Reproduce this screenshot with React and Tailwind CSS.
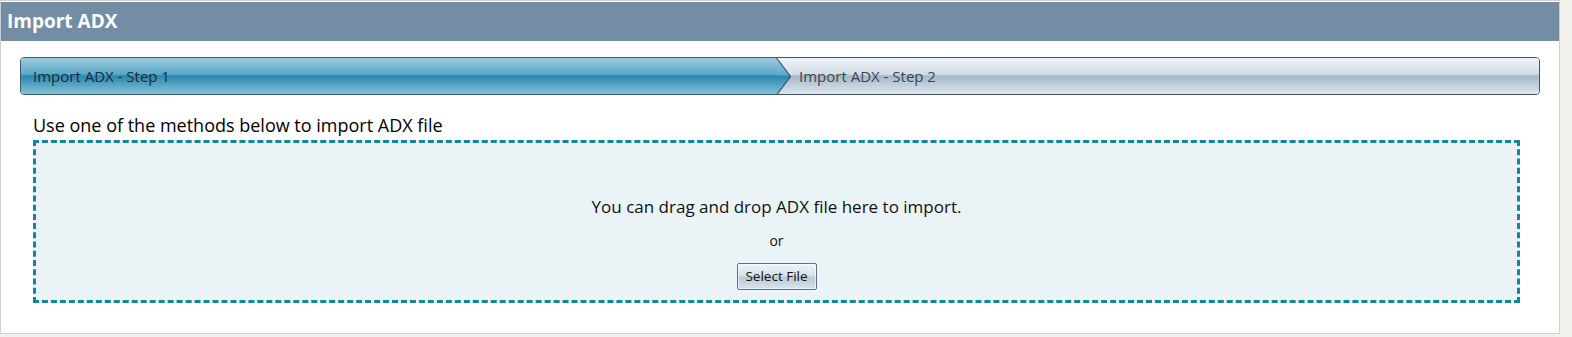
import React from 'react';

const font = { fontFamily: '"Open Sans", "Noto Sans", sans-serif' };

const StepArrow = () => (
  <svg width="16" height="37" viewBox="0 0 16 37" className="block shrink-0">
    <defs>
      <linearGradient id="stepDone" x1="0" y1="0" x2="0" y2="1">
        <stop offset="0" stopColor="#9ccbdf" />
        <stop offset="0.45" stopColor="#5aa9c8" />
        <stop offset="0.5" stopColor="#2a88ad" />
        <stop offset="1" stopColor="#86c2da" />
      </linearGradient>
      <linearGradient id="stepNext" x1="0" y1="0" x2="0" y2="1">
        <stop offset="0" stopColor="#eef2f6" />
        <stop offset="0.45" stopColor="#d3dde6" />
        <stop offset="0.5" stopColor="#a5b8c9" />
        <stop offset="1" stopColor="#dfe6ed" />
      </linearGradient>
    </defs>
    <rect x="0" y="0" width="16" height="37" fill="url(#stepNext)" />
    <polygon points="0,0 1,0 15,18.5 1,37 0,37" fill="url(#stepDone)" />
    <polyline points="0.5,0 14.5,18.5 0.5,37" fill="none" stroke="#3d5a6c" strokeWidth="1.2" />
  </svg>
);

export default function App() {
  return (
    <div className="w-[1572px] h-[337px] bg-[#f3f1ec]" style={font}>
      <div className="w-[1560px] h-[334px] bg-white border border-[#cfcfcf] pt-[1px]">
        <div className="h-[39px] bg-[#738ea4] flex items-center px-[6px]">
          <span className="text-white font-bold text-[19px] leading-none">Import ADX</span>
        </div>

        <div className="mt-[16px] ml-[19px] w-[1520px] h-[38px] flex border border-[#3c566a] rounded-[4px] overflow-hidden">
          <div className="w-[755px] flex items-center pl-[12px] text-[15px] text-[#1b2b38] bg-[linear-gradient(to_bottom,#9ccbdf_0%,#5aa9c8_45%,#2a88ad_50%,#86c2da_100%)]">
            Import ADX - Step 1
          </div>
          <StepArrow />
          <div className="flex-1 flex items-center pl-[7px] text-[15px] text-[#3a4552] bg-[linear-gradient(to_bottom,#eef2f6_0%,#d3dde6_45%,#a5b8c9_50%,#dfe6ed_100%)]">
            Import ADX - Step 2
          </div>
        </div>

        <div className="ml-[32px] mt-[18px] w-[1487px]">
          <div className="text-[18px] text-black leading-[24px]">Use one of the methods below to import ADX file</div>
          <div className="mt-[3px] h-[163px] border-[3px] border-dashed border-[#11879a] bg-[#eaf3f6] flex flex-col items-center pt-[52px]">
            <div className="text-[17px] text-[#111] leading-[24px]">You can drag and drop ADX file here to import.</div>
            <div className="mt-[13px] text-[14px] text-[#111] leading-[18px]">or</div>
            <button className="mt-[13px] w-[80px] h-[27px] border border-[#5c7185] rounded-[2px] text-[13.5px] text-[#111] bg-[linear-gradient(to_bottom,#eef3f7_0%,#d6e0e8_48%,#b9c9d6_52%,#d9e3ea_100%)] shadow-[inset_0_0_0_1px_rgba(255,255,255,0.6)]">
              Select File
            </button>
          </div>
        </div>
      </div>
    </div>
  );
}
